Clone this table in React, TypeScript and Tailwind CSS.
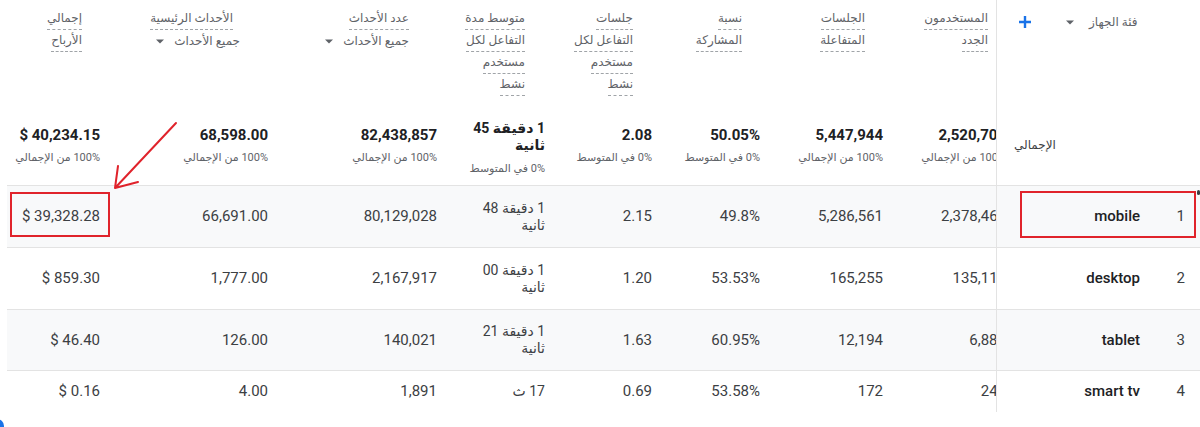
import React from "react";

const FONT = "font-['Roboto','DejaVu_Sans',sans-serif]";

type Col = { w: string; pr: string; hpr: string };
const cols: Col[] = [
  { w: "w-[109px]", pr: "pr-[16px]", hpr: "pr-[34px]" },
  { w: "w-[168px]", pr: "pr-[16px]", hpr: "pr-[44px]" },
  { w: "w-[169px]", pr: "pr-[16px]", hpr: "pr-[44px]" },
  { w: "w-[108px]", pr: "pr-[16px]", hpr: "pr-[36px]" },
  { w: "w-[107px]", pr: "pr-[16px]", hpr: "pr-[35px]" },
  { w: "w-[108px]", pr: "pr-[16px]", hpr: "pr-[34px]" },
  { w: "w-[123px]", pr: "pr-[16px]", hpr: "pr-[34px]" },
  { w: "w-[123px]", pr: "pr-[16px]", hpr: "pr-[34px]" },
];

const headers: { lines: string[]; dropdown?: boolean; titlePr?: string }[] = [
  { lines: ["إجمالي", "الأرباح"] },
  { lines: ["الأحداث الرئيسية"], dropdown: true, titlePr: "pr-[51px]" },
  { lines: ["عدد الأحداث"], dropdown: true },
  { lines: ["متوسط مدة", "التفاعل لكل", "مستخدم", "نشط"] },
  { lines: ["جلسات", "التفاعل لكل", "مستخدم", "نشط"] },
  { lines: ["نسبة", "المشاركة"] },
  { lines: ["الجلسات", "المتفاعلة"] },
  { lines: ["المستخدمون", "الجدد"] },
];

type Cell = string | string[];

const totals: { v: Cell; sub: string }[] = [
  { v: "$ 40,234.15", sub: "100% من الإجمالي" },
  { v: "68,598.00", sub: "100% من الإجمالي" },
  { v: "82,438,857", sub: "100% من الإجمالي" },
  { v: ["1 دقيقة 45", "ثانية"], sub: "0% في المتوسط" },
  { v: "2.08", sub: "0% في المتوسط" },
  { v: "50.05%", sub: "0% في المتوسط" },
  { v: "5,447,944", sub: "100% من الإجمالي" },
  { v: "2,520,704", sub: "100% من الإجمالي" },
];

const rows: { idx: string; label: string; cells: Cell[]; gray: boolean; h: string }[] = [
  {
    idx: "1",
    label: "mobile",
    gray: true,
    h: "h-[62px]",
    cells: ["$ 39,328.28", "66,691.00", "80,129,028", ["1 دقيقة 48", "ثانية"], "2.15", "49.8%", "5,286,561", "2,378,461"],
  },
  {
    idx: "2",
    label: "desktop",
    gray: false,
    h: "h-[62px]",
    cells: ["$ 859.30", "1,777.00", "2,167,917", ["1 دقيقة 00", "ثانية"], "1.20", "53.53%", "165,255", "135,117"],
  },
  {
    idx: "3",
    label: "tablet",
    gray: true,
    h: "h-[61px]",
    cells: ["$ 46.40", "126.00", "140,021", ["1 دقيقة 21", "ثانية"], "1.63", "60.95%", "12,194", "6,881"],
  },
  {
    idx: "4",
    label: "smart tv",
    gray: false,
    h: "h-[42px]",
    cells: ["$ 0.16", "4.00", "1,891", ["17 ث"], "0.69", "53.58%", "172", "248"],
  },
];

function Caret() {
  return (
    <svg width="8" height="5" viewBox="0 0 8 5" className="shrink-0">
      <path d="M0 0.5 L8 0.5 L4 4.5 Z" fill="#5f6368" />
    </svg>
  );
}

function HeaderCell({ i }: { i: number }) {
  const c = cols[i];
  const h = headers[i];
  return (
    <div className={`${c.w} shrink-0 pt-[8px] text-right text-[12px] text-[#5f6368]`} dir="ltr">
      {h.lines.map((l, k) => (
        <div key={k} className={`${h.titlePr ?? c.hpr} h-[22px]`}>
          <span
            dir="rtl"
            className="inline-block h-[22px] leading-[20px] border-b border-dashed border-[#a0a4a8]"
          >
            {l}
          </span>
        </div>
      ))}
      {h.dropdown && (
        <div className={`${c.hpr} h-[22px] flex items-center justify-end`}>
          <Caret />
          <span dir="rtl" className="ml-[10px] leading-[20px] text-[#5f6368]">
            جميع الأحداث
          </span>
        </div>
      )}
    </div>
  );
}

function DimCell({ children, className = "" }: { children: React.ReactNode; className?: string }) {
  return (
    <div className={`w-[204px] shrink-0 border-l border-[#e3e3e3] ${className}`}>{children}</div>
  );
}

function Metrics({ children }: { children: React.ReactNode }) {
  return <div className="w-[989px] shrink-0 overflow-hidden flex">{children}</div>;
}

export default function App() {
  return (
    <div className={`relative w-[1200px] h-[427px] overflow-hidden bg-white ${FONT}`} dir="ltr">
      <div className="pl-[7px]">
        {/* Header */}
        <div className="flex h-[112px]">
          <Metrics>
            {cols.map((_, i) => (
              <HeaderCell key={i} i={i} />
            ))}
          </Metrics>
          <DimCell className="pt-[12px]">
            <div className="flex items-center h-[20px]">
              <svg width="12" height="12" viewBox="0 0 12 12" className="ml-[22px] shrink-0">
                <path d="M6 0 V12 M0 6 H12" stroke="#1a73e8" strokeWidth="2.4" />
              </svg>
              <div className="ml-[35px]">
                <Caret />
              </div>
              <span dir="rtl" className="ml-[15px] text-[12px] text-[#5f6368]">
                فئة الجهاز
              </span>
            </div>
          </DimCell>
        </div>

        {/* Totals */}
        <div className="flex h-[73px]">
          <Metrics>
            {totals.map((t, i) => {
              const c = cols[i];
              const multi = Array.isArray(t.v);
              return (
                <div
                  key={i}
                  className={`${c.w} ${c.pr} shrink-0 text-right ${multi ? "pt-[8px]" : "pt-[13px]"}`}
                >
                  {multi ? (
                    <div dir="rtl" className="text-[14px] font-bold text-[#202124] leading-[17px]">
                      {(t.v as string[]).map((l, k) => (
                        <div key={k}>{l}</div>
                      ))}
                    </div>
                  ) : (
                    <div className="text-[15px] font-bold text-[#202124] leading-[20px]">{t.v as string}</div>
                  )}
                  <div
                    dir="rtl"
                    className={`text-[11px] text-[#5f6368] leading-[18px] whitespace-nowrap ${multi ? "mt-[6px]" : "mt-[4px]"}`}
                  >
                    {t.sub}
                  </div>
                </div>
              );
            })}
          </Metrics>
          <DimCell className="flex items-center pl-[17px] pb-[8px]">
            <span dir="rtl" className="text-[12px] text-[#3c4043]">
              الإجمالي
            </span>
          </DimCell>
        </div>

        {/* Rows */}
        {rows.map((r, ri) => (
          <div
            key={ri}
            className={`flex ${r.h} border-t border-[#e3e3e3] ${r.gray ? "bg-[#f8f9fa]" : "bg-white"}`}
          >
            <Metrics>
              {r.cells.map((v, i) => {
                const c = cols[i];
                const multi = Array.isArray(v);
                return (
                  <div
                    key={i}
                    className={`${c.w} ${c.pr} shrink-0 flex items-center justify-end text-[#3c4043]`}
                  >
                    {multi ? (
                      <div dir="rtl" className="text-[14px] leading-[17px] text-right">
                        {(v as string[]).map((l, k) => (
                          <div key={k}>{l}</div>
                        ))}
                      </div>
                    ) : (
                      <span className="text-[15px] whitespace-nowrap">{v as string}</span>
                    )}
                  </div>
                );
              })}
            </Metrics>
            <DimCell className="flex items-center">
              <div className="flex-1 text-right text-[15px] font-medium text-[#202124] whitespace-nowrap">
                {r.label}
              </div>
              <div className="w-[60px] pr-[15px] text-right text-[15px] text-[#3c4043]">{r.idx}</div>
            </DimCell>
          </div>
        ))}
      </div>

      {/* Annotations */}
      <div className="absolute left-[10px] top-[192px] w-[100px] h-[45px] border-2 border-[#e0232b]" />
      <div className="absolute left-[1020px] top-[191px] w-[176px] h-[47px] border-2 border-[#e0232b]" />
      <svg className="absolute left-0 top-0" width="200" height="200" viewBox="0 0 200 200">
        <path
          d="M176 123 L115 188 M115 188 L118 166 M115 188 L138 182"
          stroke="#e0232b"
          strokeWidth="2"
          fill="none"
          strokeLinecap="round"
        />
      </svg>
      <div className="absolute left-[1197px] top-[190px] w-[3px] h-[5px] bg-[#3c4043] rounded-sm" />
      <div className="absolute left-[-10px] top-[419px] w-[14px] h-[14px] rounded-full bg-[#1a73e8]" />
    </div>
  );
}
